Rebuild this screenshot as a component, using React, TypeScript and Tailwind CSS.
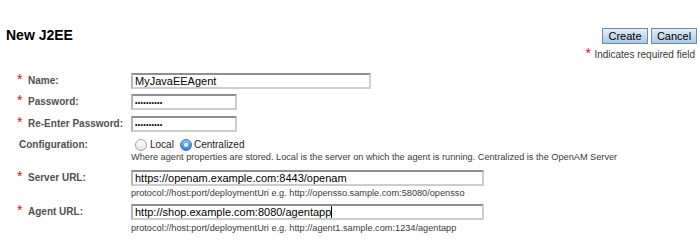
import React from 'react';

const font = { fontFamily: '"Liberation Sans", Arial, Helvetica, sans-serif' };

const Star: React.FC = () => (
  <span className="inline-block w-[11px] text-[14px] leading-none text-[#cc1414] relative top-[-2px]">*</span>
);

const Label: React.FC<{ text: string; required?: boolean; h?: string }> = ({ text, required, h = 'h-[16px]' }) => (
  <div className={`w-[131px] shrink-0 pl-[17px] flex items-center ${h}`}>
    {required ? <Star /> : <span className="inline-block w-[2px]" />}
    <span className="text-[10px] font-bold text-[#505050] leading-none">{text}</span>
  </div>
);

const Field: React.FC<{ width: string; value: string; dots?: boolean; caret?: boolean }> = ({ width, value, dots, caret }) => (
  <div
    className={`${width} h-[16px] border-2 border-[#cdcdcd] border-t-[#8f8f8f] border-l-[#b5b5b5] bg-white flex items-center pl-[2px] overflow-hidden`}
  >
    <span className={dots ? 'text-[7px] leading-none text-black tracking-[0.3px]' : 'text-[11px] leading-none text-black'}>
      {value}
    </span>
    {caret && <span className="w-px h-[12px] bg-black" />}
  </div>
);

const Button: React.FC<{ text: string }> = ({ text }) => (
  <button className="w-[46px] h-[16px] border border-[#6f8aa5] bg-gradient-to-b from-[#e3eef8] to-[#a9c9e6] text-[11px] leading-none text-black flex items-center justify-center">
    {text}
  </button>
);

const Help: React.FC<{ text: string; className?: string }> = ({ text, className = '' }) => (
  <div className={`text-[9.2px] leading-[11px] text-[#3a3a3a] whitespace-nowrap ${className}`}>{text}</div>
);

export default function App() {
  return (
    <div className="w-[700px] h-[239px] bg-white overflow-hidden" style={font}>
      {/* Header */}
      <div className="flex justify-between items-start pt-[28px] pl-[6px] pr-[3px]">
        <h1 className="text-[14px] font-bold leading-[16px] mt-[-1px] text-black">New J2EE</h1>
        <div className="flex gap-[3px]">
          <Button text="Create" />
          <Button text="Cancel" />
        </div>
      </div>
      <div className="flex justify-end items-center pr-[5px] mt-[5px] h-[12px]">
        <Star />
        <span className="text-[10px] leading-none text-[#3a3a3a] ml-[-2px]">Indicates required field</span>
      </div>

      {/* Form */}
      <div className="mt-[12px]">
        <div className="flex">
          <Label text="Name:" required />
          <Field width="w-[240px]" value="MyJavaEEAgent" />
        </div>
        <div className="flex mt-[5px]">
          <Label text="Password:" required />
          <Field width="w-[106px]" value="••••••••••" dots />
        </div>
        <div className="flex mt-[6px]">
          <Label text="Re-Enter Password:" required />
          <Field width="w-[106px]" value="••••••••••" dots />
        </div>
        <div className="flex mt-[5px]">
          <Label text="Configuration:" h="h-[15px]" />
          <div>
            <div className="h-[15px] flex items-center text-[10px] leading-none text-[#222]">
              <span className="ml-[4px] w-[12px] h-[12px] rounded-full border border-[#a3a3a3] bg-gradient-to-b from-white to-[#e6e6e6]" />
              <span className="ml-[3px]">Local</span>
              <span className="ml-[6px] w-[12px] h-[12px] rounded-full border border-[#3d74b8] bg-gradient-to-b from-[#8cc4f5] to-[#2b7ed9] flex items-center justify-center">
                <span className="w-[4px] h-[4px] rounded-full bg-white" />
              </span>
              <span className="ml-[2px]">Centralized</span>
            </div>
            <Help text="Where agent properties are stored. Local is the server on which the agent is running. Centralized is the OpenAM Server" className="leading-[10px]" />
          </div>
        </div>
        <div className="flex mt-[7px]">
          <Label text="Server URL:" required />
          <div>
            <Field width="w-[353px]" value="https://openam.example.com:8443/openam" />
            <Help text="protocol://host:port/deploymentUri e.g. http://opensso.sample.com:58080/opensso" className="mt-[2px]" />
          </div>
        </div>
        <div className="flex mt-[5px]">
          <Label text="Agent URL:" required />
          <div>
            <Field width="w-[353px]" value="http://shop.example.com:8080/agentapp" caret />
            <Help text="protocol://host:port/deploymentUri e.g. http://agent1.sample.com:1234/agentapp" className="mt-[3px]" />
          </div>
        </div>
      </div>
    </div>
  );
}
